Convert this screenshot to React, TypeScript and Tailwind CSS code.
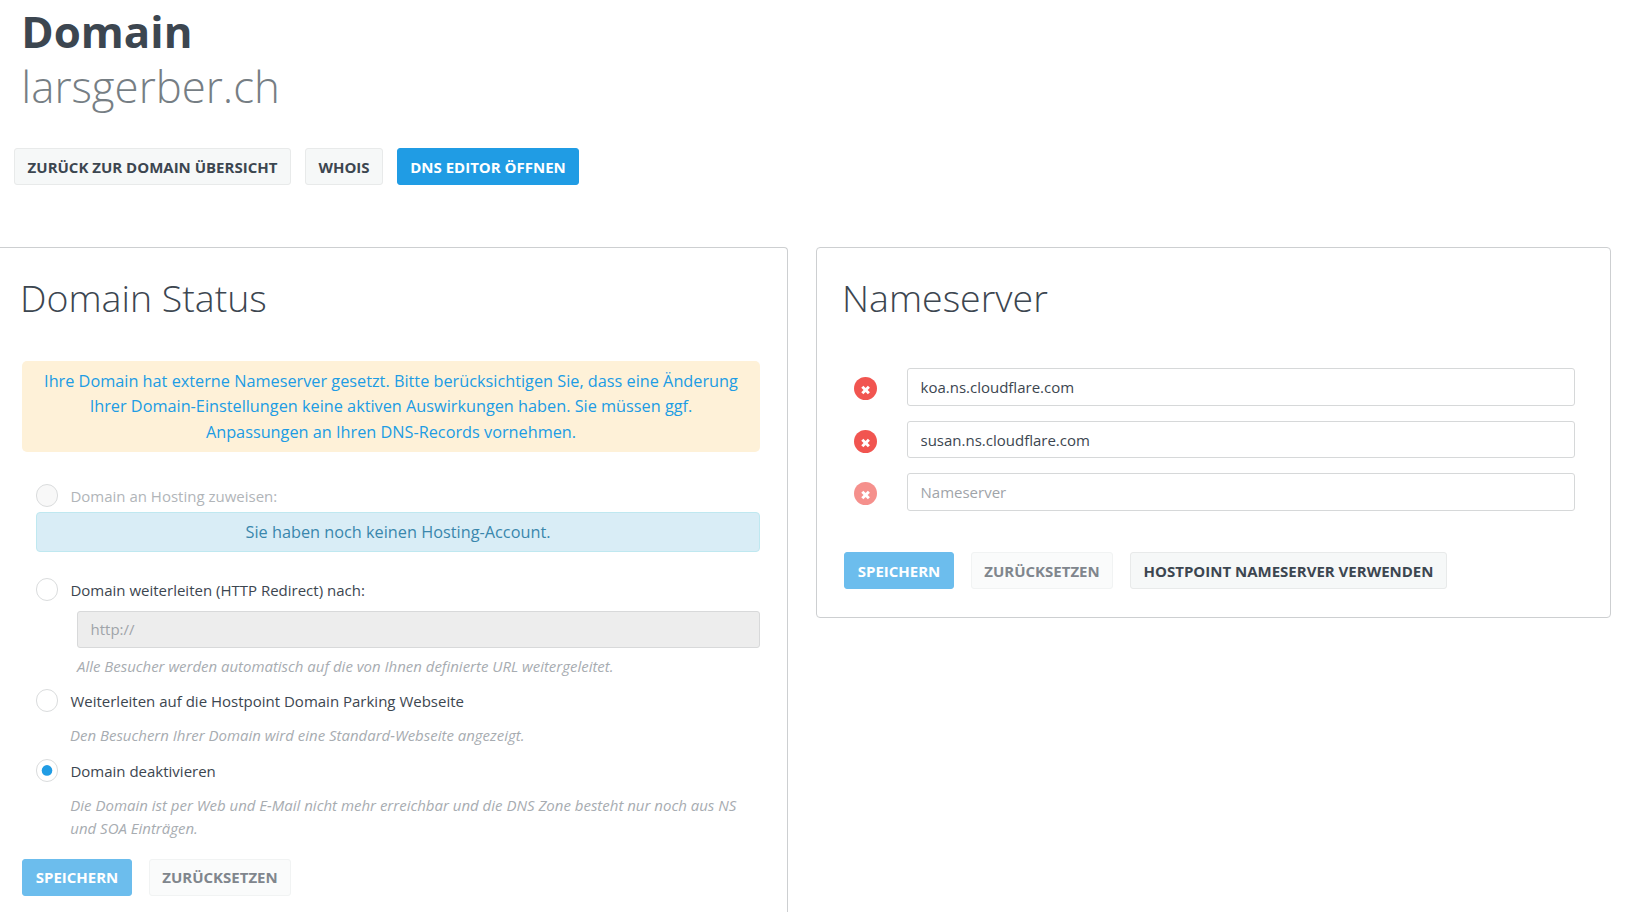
import React from "react";

const BTN = "h-[37px] rounded-[3px] border px-[12px] text-[15px] font-bold whitespace-nowrap";
const BTN_LIGHT = "border-[#e8eaea] bg-[#f6f8f8] text-[#3c4650]";
const BTN_BLUE = "border-[#209ce4] bg-[#209ce4] text-white";
const BTN_LIGHT_OFF = "border-[#f1f3f3] bg-[#fafbfb] text-[#80868d]";
const BTN_BLUE_OFF = "border-[#6cbded] bg-[#6cbded] text-white";

function Button({ tone, className = "", children }: { tone: string; className?: string; children: React.ReactNode }) {
  return (
    <button type="button" className={`${BTN} ${tone} ${className}`}>
      {children}
    </button>
  );
}

function Radio({ checked = false, disabled = false }: { checked?: boolean; disabled?: boolean }) {
  return (
    <span
      className={`flex h-[23px] w-[22px] shrink-0 items-center justify-center rounded-full border border-[#dadcdd] ${
        disabled ? "bg-[#f8f8f8]" : "bg-white"
      }`}
    >
      {checked && (
        <svg className="h-[21px] w-[20px]" viewBox="0 0 20 21">
          <circle cx="10" cy="10.4" r="5.3" fill="#209ce4" />
        </svg>
      )}
    </span>
  );
}

function Option({
  label,
  checked,
  disabled,
  className = "",
}: {
  label: string;
  checked?: boolean;
  disabled?: boolean;
  className?: string;
}) {
  return (
    <label className={`flex h-[23px] items-start gap-[12.4px] ${className}`}>
      <Radio checked={checked} disabled={disabled} />
      <span className={`pt-px text-[15px] leading-[23px] ${disabled ? "text-[#b1b5b9]" : "text-[#3c4650]"}`}>{label}</span>
    </label>
  );
}

function RemoveIcon({ faded = false }: { faded?: boolean }) {
  return (
    <svg className={`mt-[9px] size-[23px] shrink-0 ${faded ? "opacity-65" : ""}`} viewBox="0 0 23 23">
      <circle cx="11.5" cy="11.5" r="11.5" fill="#f15550" />
      <path d="M8.3 9.7 L14.9 16.3 M14.9 9.7 L8.3 16.3" stroke="#fff" strokeWidth="2.9" fill="none" />
    </svg>
  );
}

const SERVERS = ["koa.ns.cloudflare.com", "susan.ns.cloudflare.com", ""];

export default function App() {
  return (
    <div className="flex h-[912px] w-[1626px] flex-col overflow-hidden bg-white font-['Open_Sans',sans-serif] text-[#3c4650]">
      <header className="h-[247px] shrink-0 pl-[14px]">
        <h1 className="pl-[7.3px] text-[43.8px] leading-[55px]">
          <span className="block pt-[4px] font-bold">Domain</span>
          <span className="block font-light text-[#767e84]">larsgerber.ch</span>
        </h1>
        <div className="flex gap-[14px] pt-[34px]">
          <Button tone={BTN_LIGHT} className="w-[277px] pt-px">ZURÜCK ZUR DOMAIN ÜBERSICHT</Button>
          <Button tone={BTN_LIGHT} className="w-[78px] pt-px">WHOIS</Button>
          <Button tone={BTN_BLUE} className="w-[182px] pt-px">DNS EDITOR ÖFFNEN</Button>
        </div>
      </header>

      <main className="flex grow items-start gap-[28px]">
        <section className="h-[680px] w-[788px] rounded-tr-[4px] border-t border-r border-[#cdcfd1] pr-[27px] pl-[22px]">
          <h2 className="-ml-[2px] pt-[24px] text-[37.5px] leading-[52px] font-light">Domain Status</h2>
          <div className="mt-[37px] h-[91px] rounded-[5px] bg-[#fef1d8] pt-[8px] text-center text-[16.27px] leading-[25.4px] text-[#209ce4]">
            Ihre Domain hat externe Nameserver gesetzt. Bitte berücksichtigen Sie, dass eine Änderung
            <br />
            Ihrer Domain-Einstellungen keine aktiven Auswirkungen haben. Sie müssen ggf.
            <br />
            Anpassungen an Ihren DNS-Records vornehmen.
          </div>
          <div className="pt-[32px] pl-[14px]">
            <Option label="Domain an Hosting zuweisen:" disabled />
            <div className="mt-[5px] h-[40px] rounded-[4px] border border-[#bfe8f0] bg-[#d9edf6] text-center text-[16.3px] leading-[38px] text-[#3a87ad]">
              Sie haben noch keinen Hosting-Account.
            </div>
            <Option label="Domain weiterleiten (HTTP Redirect) nach:" className="mt-[26px]" />
            <div className="mt-[10px] ml-[41px] h-[37px] rounded-[3px] border border-[#d8d9da] bg-[#ededed] px-[12.5px] text-[15px] leading-[35px] text-[#9fa4a9]">
              http://
            </div>
            <p className="mt-[7px] ml-[41px] text-[14.96px] leading-[23px] text-[#a7acb1] italic">
              Alle Besucher werden automatisch auf die von Ihnen definierte URL weitergeleitet.
            </p>
            <Option label="Weiterleiten auf die Hostpoint Domain Parking Webseite" className="mt-[11px]" />
            <p className="mt-[12px] ml-[34px] text-[14.97px] leading-[23px] text-[#a7acb1] italic">
              Den Besuchern Ihrer Domain wird eine Standard-Webseite angezeigt.
            </p>
            <Option label="Domain deaktivieren" checked className="mt-[12px]" />
            <p className="mt-[12px] ml-[34.3px] text-[14.99px] leading-[23px] text-[#a7acb1] italic">
              Die Domain ist per Web und E-Mail nicht mehr erreichbar und die DNS Zone besteht nur noch aus NS
              <br />
              und SOA Einträgen.
            </p>
          </div>
          <div className="flex gap-[17px] pt-[19px]">
            <Button tone={BTN_BLUE_OFF} className="w-[110px] pb-px">SPEICHERN</Button>
            <Button tone={BTN_LIGHT_OFF} className="w-[142px] pb-px">ZURÜCKSETZEN</Button>
          </div>
        </section>

        <section className="h-[371px] w-[795px] rounded-[4px] border border-[#cdcfd1] pr-[35px] pl-[27px]">
          <h2 className="-ml-[2px] pt-[24px] text-[37.5px] leading-[52px] font-light">Nameserver</h2>
          <div className="flex flex-col gap-[15px] pt-[44px] pl-[10px]">
            {SERVERS.map((name, i) => (
              <div key={name} className="flex h-[37.5px] items-start gap-[30px]">
                <RemoveIcon faded={!name} />
                <input
                  className={`h-full w-[668px] rounded-[3px] border border-[#d6d8d9] bg-white px-[12.5px] text-[15px] text-[#3c4650] placeholder:text-[#9fa4a9] ${i === 1 ? "pt-px" : ""}`}
                  defaultValue={name}
                  placeholder="Nameserver"
                />
              </div>
            ))}
          </div>
          <div className="flex gap-[17px] pt-[41.5px]">
            <Button tone={BTN_BLUE_OFF} className="w-[110px] pt-px">SPEICHERN</Button>
            <Button tone={BTN_LIGHT_OFF} className="w-[142px] pt-px">ZURÜCKSETZEN</Button>
            <Button tone={BTN_LIGHT} className="w-[317px] pt-px">HOSTPOINT NAMESERVER VERWENDEN</Button>
          </div>
        </section>
      </main>
    </div>
  );
}
